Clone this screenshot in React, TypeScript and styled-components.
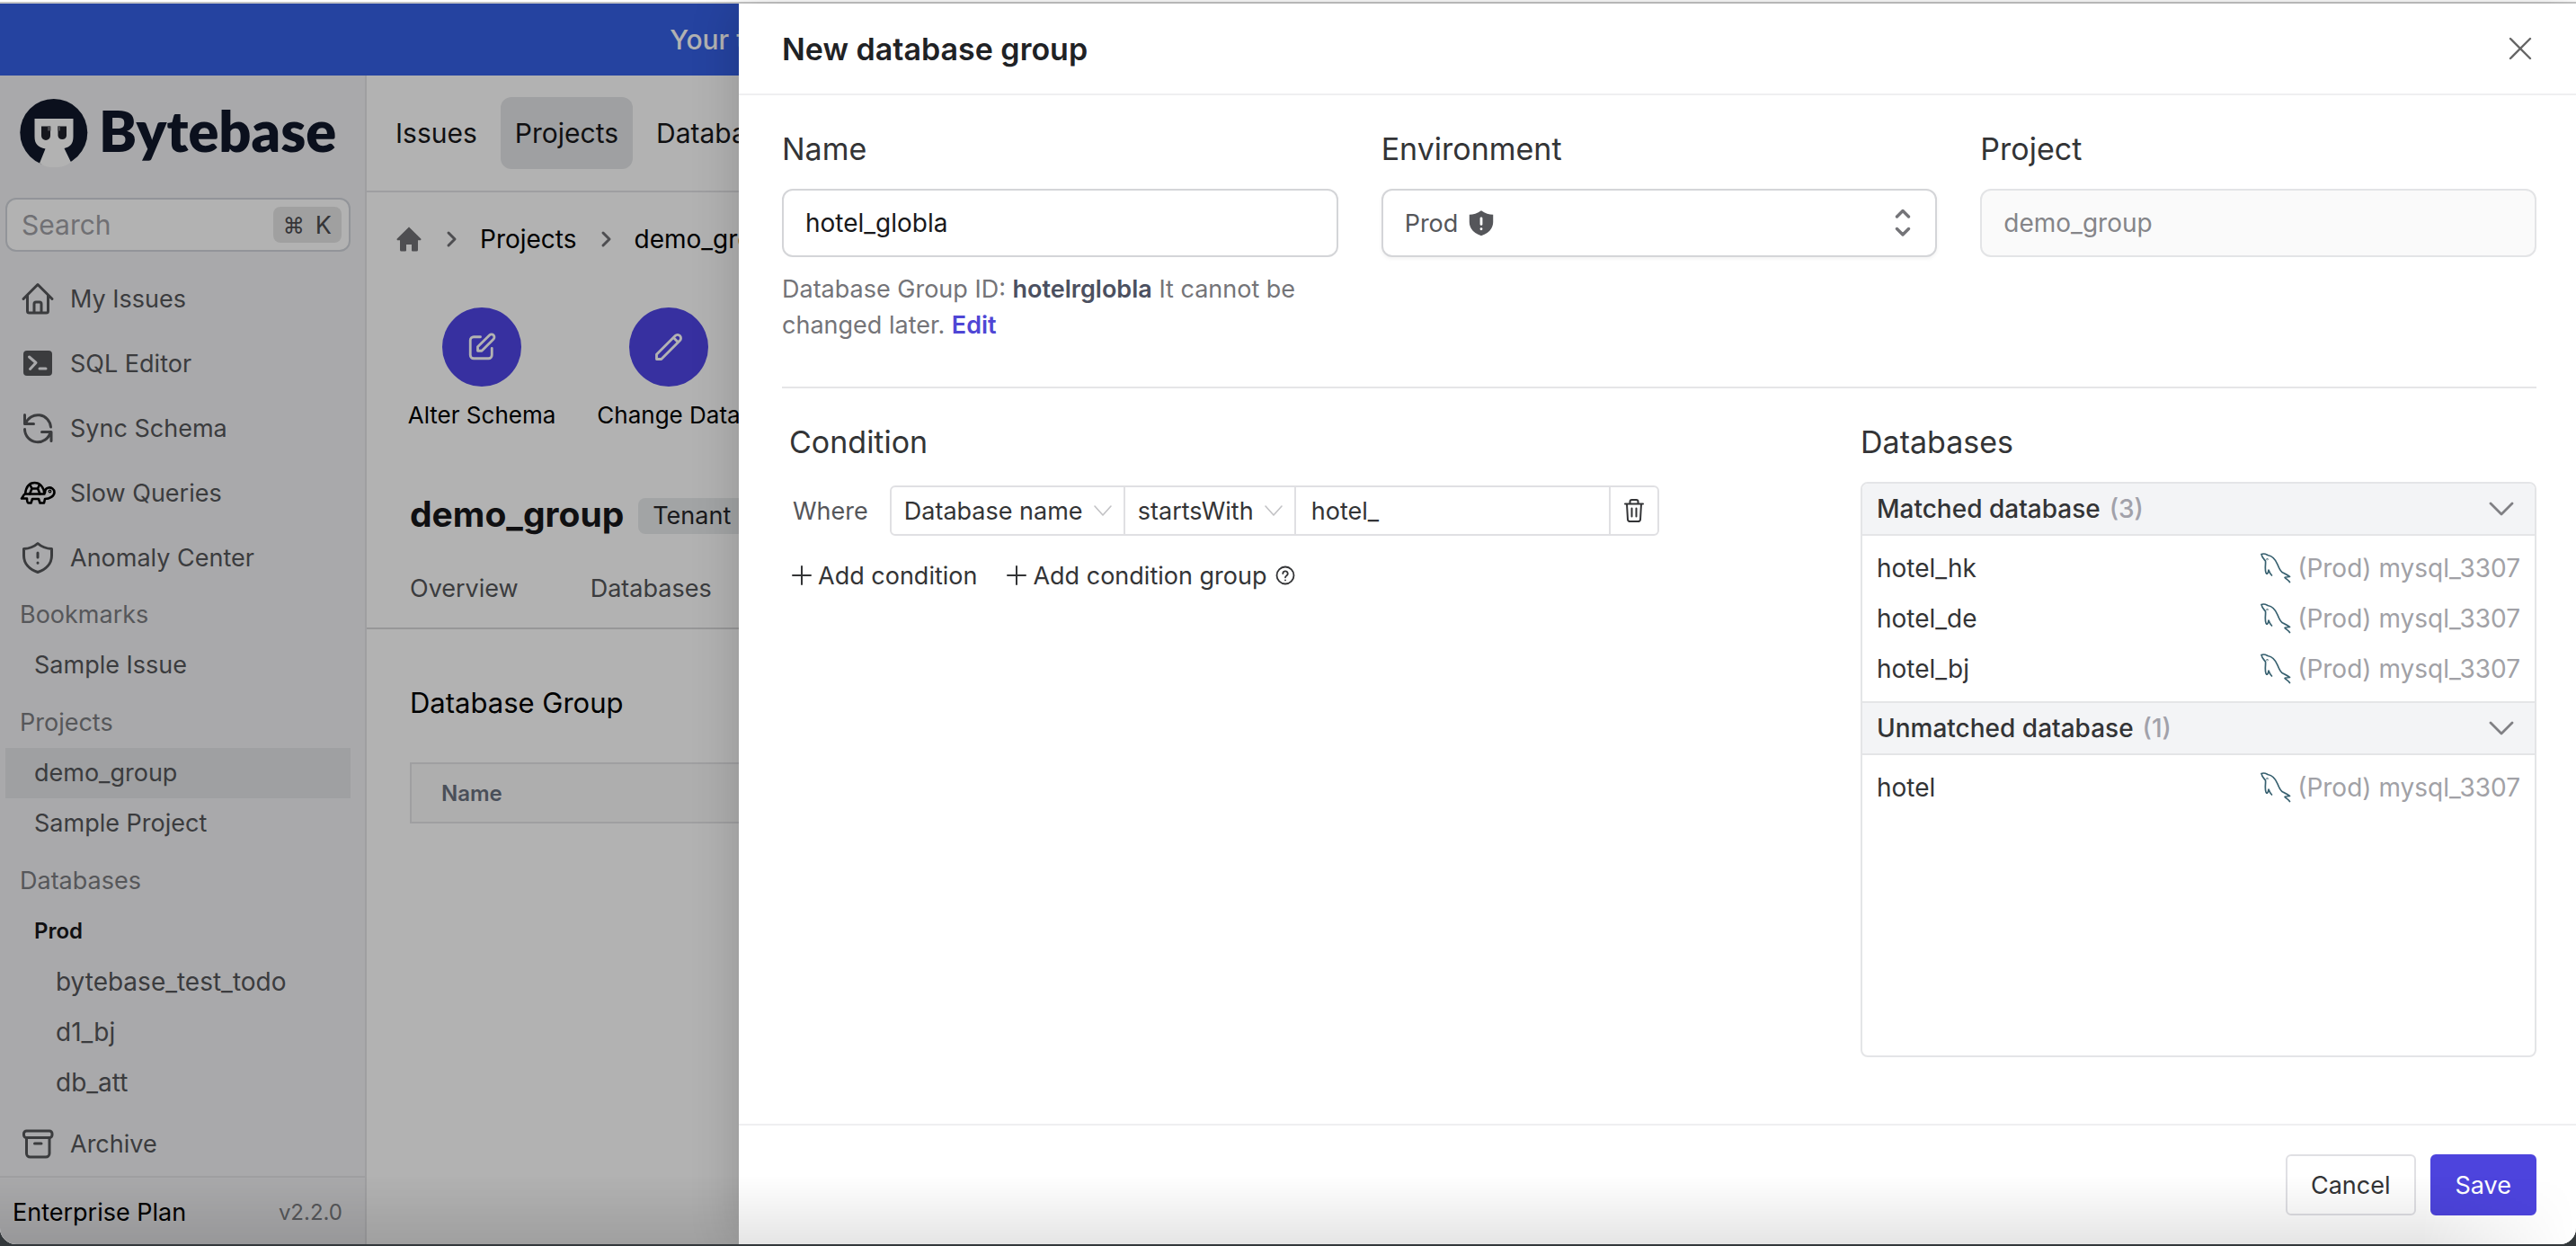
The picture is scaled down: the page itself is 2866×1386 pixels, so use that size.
import React from "react";
import styled, { createGlobalStyle } from "styled-components";

const Global = createGlobalStyle`
  *, *::before, *::after { box-sizing: border-box; }
  html, body, #root { height: 100%; }
  body {
    margin: 0;
    overflow: hidden;
    background: #33383b;
    font-family: Inter, "DejaVu Sans", sans-serif;
    font-size: 27px;
    color: #333436;
  }
  button, input, select { font: inherit; color: inherit; margin: 0; }
  button { cursor: pointer; }
  h1, h2, h3, p, ul { margin: 0; padding: 0; font-weight: 400; }
  ul { list-style: none; }
  a { color: inherit; text-decoration: none; }
`;

/* ---------- window ---------- */

const Window = styled.div`
  height: calc(100vh - 2px);
  display: flex;
  flex-direction: column;
  position: relative;
  overflow: hidden;
  background: #fff;
  border-radius: 0 0 18px 18px;
`;

const TopEdge = styled.div`
  height: 4px;
  flex: none;
  background: #fff;
  border-bottom: 2px solid #c6c6c6;
`;

const Page = styled.div`
  flex: 1;
  min-height: 0;
  position: relative;
  display: flex;
  flex-direction: column;
`;

const Banner = styled.div`
  height: 80px;
  flex: none;
  display: flex;
  align-items: center;
  padding-left: 26%;
  background: #3560e5;
  color: #fff;
  font-size: 30px;
  font-weight: 500;
  white-space: nowrap;
`;

const Columns = styled.div`
  flex: 1;
  min-height: 0;
  display: flex;
`;

/* ---------- sidebar ---------- */

const Sidebar = styled.aside`
  width: 408px;
  flex: none;
  display: flex;
  flex-direction: column;
  background: #f3f3f5;
  border-right: 2px solid #e4e4e7;
`;

const Brand = styled.a`
  height: 136px;
  display: flex;
  align-items: center;
  gap: 12px;
  padding: 0 0 8px 22px;
  color: #10182a;
  font-family: Lato, Inter, sans-serif;
  font-size: 63px;
  font-weight: 800;
  line-height: 72px;
`;

const BrandName = styled.span`
  padding-bottom: 6px;
`;

const SearchBox = styled.label`
  height: 60px;
  margin: 0 16px 16px 6px;
  padding: 0 8px 0 16px;
  display: flex;
  align-items: center;
  background: #fff;
  border: 2px solid #d1d5db;
  border-radius: 12px;
`;

const SearchInput = styled.input`
  flex: 1;
  min-width: 0;
  padding: 0;
  border: 0;
  outline: 0;
  background: none;
  font-size: 30px;
  &::placeholder { color: #a1a1a6; opacity: 1; }
`;

const Kbd = styled.kbd`
  height: 40px;
  padding: 0 11px;
  display: flex;
  align-items: center;
  gap: 12px;
  background: #e6e6e6;
  border-radius: 8px;
  color: #4c4c50;
  font-family: inherit;
  font-size: 27px;
  span:first-child { font-size: 24px; }
`;

const NavLink = styled.a`
  height: 72px;
  flex: none;
  padding-left: 24px;
  display: flex;
  align-items: center;
  gap: 18px;
  color: #55565a;
`;

const SectionLabel = styled.h3`
  height: 56px;
  padding-left: 22px;
  line-height: 56px;
  font-size: 27px;
  color: #7c7d82;
  ul + & { margin-top: 8px; }
`;

const TreeItem = styled.a<{ $active?: boolean; $deep?: boolean; $strong?: boolean }>`
  display: block;
  height: 56px;
  margin: 0 16px 0 6px;
  padding-left: ${(p) => (p.$deep ? 56 : 32)}px;
  line-height: 56px;
  font-size: ${(p) => (p.$strong ? 24 : p.$deep ? 28 : 27)}px;
  font-weight: ${(p) => (p.$strong ? 600 : 400)};
  color: ${(p) => (p.$strong ? "#18181b" : "#55565a")};
  background: ${(p) => (p.$active ? "#e4e6e8" : "none")};
`;

const SidebarEnd = styled.div`
  margin-top: auto;
`;

const PlanBar = styled.div`
  height: 76px;
  padding: 2px 25px 0 14px;
  display: flex;
  align-items: center;
  justify-content: space-between;
  border-top: 2px solid #e4e4e7;
  color: #000;
`;

const Version = styled.span`
  font-size: 24px;
  color: #7c7d82;
`;

/* ---------- main page ---------- */

const Main = styled.main`
  flex: 1;
  min-width: 0;
  background: #fff;
  white-space: nowrap;
`;

const TopNav = styled.nav`
  height: 130px;
  padding: 0 16px;
  display: flex;
  align-items: center;
  gap: 10px;
  border-bottom: 2px solid #e4e4e7;
`;

const TopLink = styled.a<{ $active?: boolean }>`
  height: 80px;
  padding: 0 16px;
  line-height: 80px;
  font-size: 30px;
  color: #18181b;
  border-radius: 12px;
  background: ${(p) => (p.$active ? "#e4e6e8" : "none")};
`;

const Crumbs = styled.nav`
  height: 104px;
  padding-left: 32px;
  display: flex;
  align-items: center;
  gap: 18px;
  font-size: 28px;
  color: #000;
`;

const Actions = styled.div`
  padding: 24px 0 0 48px;
  display: flex;
  gap: 48px;
`;

const Action = styled.button`
  width: 160px;
  padding: 0;
  border: 0;
  background: none;
  display: flex;
  flex-direction: column;
  align-items: center;
  gap: 12px;
  font-size: 26px;
  line-height: 40px;
  white-space: nowrap;
  color: #000;
`;

const ActionIcon = styled.span`
  width: 88px;
  height: 88px;
  border-radius: 50%;
  display: grid;
  place-items: center;
  background: #4f46e5;
  color: #fff;
`;

const TitleRow = styled.div`
  padding: 68px 0 0 48px;
  display: flex;
  align-items: flex-end;
  gap: 16px;
`;

const Title = styled.h1`
  font-size: 39px;
  font-weight: 700;
  line-height: 44px;
  color: #18181b;
`;

const Tag = styled.span`
  height: 40px;
  padding: 0 16px;
  line-height: 40px;
  background: #e9ebed;
  border-radius: 8px;
  color: #27272a;
`;

const Tabs = styled.nav`
  height: 106px;
  padding: 16px 0 0 48px;
  display: flex;
  align-items: center;
  gap: 80px;
  border-bottom: 2px solid #d8d8da;
  color: #55565a;
`;

const SectionTitle = styled.h2`
  padding: 60px 0 0 48px;
  font-size: 31px;
  font-weight: 400;
  line-height: 44px;
  color: #000;
`;

const GroupTable = styled.table`
  width: calc(100% - 96px);
  height: 68px;
  margin: 44px 48px 0;
  border: 2px solid #e4e4e7;
  border-spacing: 0;
  background: #fafafa;
`;

const HeadCell = styled.th`
  padding: 0 33px;
  text-align: left;
  font-size: 24px;
  font-weight: 600;
  color: #6b7280;
`;

/* ---------- drawer ---------- */

const Mask = styled.div`
  position: absolute;
  inset: 0;
  background: rgba(0, 0, 0, 0.3);
`;

const Drawer = styled.section`
  position: absolute;
  top: 0;
  right: 0;
  bottom: 0;
  width: calc(100% - 822px);
  display: flex;
  flex-direction: column;
  background: #fff;
  box-shadow: -4px 0 48px rgba(0, 0, 0, 0.16);
`;

const DrawerHead = styled.header`
  height: 102px;
  flex: none;
  padding: 0 44px 0 48px;
  display: flex;
  align-items: center;
  justify-content: space-between;
  border-bottom: 2px solid #efeff1;
`;

const DrawerTitle = styled.h2`
  font-size: 34px;
  font-weight: 600;
  color: #1f2225;
`;

const IconButton = styled.button`
  width: 36px;
  height: 36px;
  padding: 0;
  border: 0;
  background: none;
  display: grid;
  place-items: center;
  color: #666;
`;

const DrawerBody = styled.div`
  flex: 1;
  min-height: 0;
  padding: 36px 44px 0 48px;
`;

const Fields = styled.div`
  display: grid;
  grid-template-columns: repeat(3, 1fr);
  gap: 48px;
  padding-bottom: 48px;
  border-bottom: 2px solid #e5e5e7;
`;

const FieldLabel = styled.label`
  display: block;
  margin-bottom: 20px;
  font-size: 34px;
  line-height: 48px;
`;

const TextInput = styled.input`
  display: block;
  width: 100%;
  height: 76px;
  padding: 0 24px;
  border: 2px solid #d4d5d8;
  border-radius: 12px;
  outline: 0;
  background: #fff;
  font-size: 28px;
  color: #18181b;
  &:disabled { background: #fafafa; border-color: #e3e4e6; color: #858589; }
`;

const SelectWrap = styled.div`
  position: relative;
`;

const Select = styled.select`
  display: block;
  width: 100%;
  height: 76px;
  padding: 0 24px;
  border: 2px solid #d4d5d8;
  border-radius: 12px;
  outline: 0;
  appearance: none;
  background: #fff;
  color: #55565a;
  box-shadow: 0 2px 4px rgba(0, 0, 0, 0.05);
`;

const SelectMark = styled.span`
  position: absolute;
  inset: 0;
  padding: 0 22px 0 94px;
  display: flex;
  align-items: center;
  justify-content: space-between;
  pointer-events: none;
  color: #55565a;
`;

const Help = styled.p`
  margin-top: 16px;
  line-height: 40px;
  color: #747478;
  strong { font-weight: 600; color: #4b5060; }
  a { font-weight: 600; color: #4f46d5; }
`;

const Lower = styled.div`
  display: grid;
  grid-template-columns: 1fr 752px;
  padding-top: 36px;
`;

const Condition = styled.div`
  padding-left: 8px;
`;

const PanelTitle = styled.h3`
  margin-bottom: 20px;
  font-size: 34px;
  line-height: 48px;
`;

const Rule = styled.div`
  display: flex;
  align-items: center;
  gap: 24px;
  padding: 4px 0 0 4px;
  color: #55565a;
`;

const RuleBox = styled.div`
  height: 56px;
  display: grid;
  grid-template-columns: 258px 190px 350px 54px;
  border: 2px solid #e0e0e3;
  border-radius: 6px;
  color: #333436;
  && > * + * { border-left: 2px solid #e0e0e3; }
`;

const RuleCell = styled.label`
  position: relative;
  display: flex;
  svg { position: absolute; right: 11px; top: 14px; pointer-events: none; }
`;

const RuleSelect = styled.select`
  width: 100%;
  padding: 0 0 0 14px;
  border: 0;
  outline: 0;
  appearance: none;
  background: none;
`;

const RuleInput = styled.input`
  width: 100%;
  padding: 0 17px;
  border: 0;
  outline: 0;
  background: none;
`;

const RuleDelete = styled.button`
  padding: 0;
  border: 0;
  background: none;
  display: grid;
  place-items: center;
`;

const AddRow = styled.div`
  display: flex;
  gap: 32px;
  padding: 24px 0 0 2px;
`;

const AddButton = styled.button`
  height: 40px;
  padding: 0;
  border: 0;
  background: none;
  display: flex;
  align-items: center;
  gap: 6px;
`;

const ListBox = styled.div`
  height: 640px;
  border: 2px solid #e4e5e7;
  border-radius: 8px;
  overflow: hidden;
  font-size: 28px;
`;

const GroupHead = styled.button`
  width: 100%;
  height: 58px;
  padding: 0 21px 0 16px;
  border: 0;
  border-bottom: 2px solid #e4e5e7;
  background: #f3f4f6;
  display: flex;
  align-items: center;
  gap: 10px;
  font-weight: 500;
  ul + & { height: 60px; border-top: 2px solid #e4e5e7; }
  svg { margin-left: auto; color: #808084; }
`;

const Count = styled.span`
  color: #a1a1aa;
`;

const DbList = styled.ul`
  padding: 8px 16px;
`;

const DbRow = styled.li`
  height: 56px;
  display: flex;
  align-items: center;
  justify-content: space-between;
`;

const Instance = styled.span`
  display: flex;
  align-items: center;
  gap: 6px;
  color: #a1a1a6;
`;

const DrawerFoot = styled.footer`
  height: 134px;
  flex: none;
  padding: 0 44px;
  display: flex;
  align-items: center;
  justify-content: flex-end;
  gap: 16px;
  border-top: 2px solid #efeff1;
`;

const Button = styled.button<{ $primary?: boolean }>`
  height: 68px;
  padding: 0 26px;
  border: 2px solid ${(p) => (p.$primary ? "#4d44dd" : "#e0e0e4")};
  border-radius: 6px;
  background: ${(p) => (p.$primary ? "#4d44dd" : "#fff")};
  color: ${(p) => (p.$primary ? "#fff" : "#333436")};
`;

const BottomShade = styled.div`
  position: absolute;
  left: 0;
  right: 0;
  bottom: 0;
  height: 76px;
  pointer-events: none;
  background: linear-gradient(to bottom, rgba(0, 0, 0, 0), rgba(0, 0, 0, 0.1));
  mask-image: linear-gradient(to right, #000 94%, transparent);
`;

/* ---------- icons ---------- */

type IconProps = { size?: number; box?: number; width?: number; children: React.ReactNode; color?: string };

const Glyph = styled.svg`
  flex: none;
  overflow: visible;
`;

const Icon = ({ size = 36, box = 36, width = 3, color = "currentColor", children }: IconProps) => (
  <Glyph
    width={size}
    height={size}
    viewBox={`0 0 ${box} ${box}`}
    fill="none"
    stroke={color}
    strokeWidth={width}
    strokeLinecap="round"
    strokeLinejoin="round"
    aria-hidden="true"
  >
    {children}
  </Glyph>
);

const LogoMark = () => (
  <svg width="76" height="76" viewBox="0 0 76 76" aria-hidden="true">
    <circle cx="37.8" cy="37.5" r="37.5" fill="#10182a" />
    <path
      d="M16.5 22H59.5V42C59.5 50 56 53.5 49.5 55L57 70.5C51 75 44 76.5 38 76C31 76.5 26 74 22 71.5L28.5 55.5C20 53.5 16.5 50 16.5 42Z"
      fill="#fff"
    />
    <path d="M24 30.5H34V41a5 5 0 0 1-10 0ZM42.5 30.5H52V41a4.8 4.8 0 0 1-9.5 0Z" fill="#20222a" />
    <path d="M31 30.5h3.5v5H31zM42 30.5h3v5h-3z" fill="#6a6b70" />
  </svg>
);

const HouseIcon = () => (
  <Icon>
    <path d="M2 18.5 18 2.5l16 16M6.5 15v17a2 2 0 0 0 2 2h19a2 2 0 0 0 2-2V15M14 34V24a2 2 0 0 1 2-2h4a2 2 0 0 1 2 2v10" />
  </Icon>
);

const TerminalIcon = () => (
  <Icon width={3}>
    <rect x="2" y="4" width="32" height="28" rx="4" fill="currentColor" stroke="none" />
    <path d="m8.5 11 7.5 6.5-6.5 7M20 24h7" stroke="#f3f3f5" />
  </Icon>
);

const SyncIcon = () => (
  <Icon>
    <path d="M3.5 3.5v10h10M4.5 13A14.5 14.5 0 0 1 32.5 17M33 32.5v-10H22.5M3.5 19.5A14.5 14.5 0 0 0 32 23" />
  </Icon>
);

const TurtleIcon = () => (
  <Icon width={2.6} color="#000">
    <path d="M4 19.500C5 11 9 7 14.500 7S24.500 11 25.500 19.500ZM4 19.500C2 20 1.500 23 0 24.500H6C6 27 6 29.500 8 29.500H10.500L12 25H19L20.500 29.500H25L26 25C31 25 36.500 22 36.500 17.500 36.500 14 33 12 30 12.500 27 13 26 15 26 18" />
    <path d="M11.500 13.500H18L20.500 19.500M11.500 13.500 9 19.500M11.500 13.500 9.500 9.500M18 13.500 20 9" />
    <circle cx="31.500" cy="16.500" r="0.600" />
  </Icon>
);

const ShieldIcon = () => (
  <Icon>
    <path d="M18 2.500C13.500 6.500 8 8.300 2.500 8.500V16C2.500 25 9 31.500 18 34.500 27 31.500 33.500 25 33.500 16V8.500C28 8.300 22.500 6.500 18 2.500Z" />
    <path d="M18 13v5M18 24v.2" />
  </Icon>
);

const ArchiveIcon = () => (
  <Icon>
    <rect x="2.500" y="4" width="31.500" height="7.500" rx="3" />
    <path d="M5.500 11.500V29a4 4 0 0 0 4 4h17.500a4 4 0 0 0 4-4V11.500M14.500 18h7.500" />
  </Icon>
);

const Crumb = () => (
  <Icon size={28} box={28} width={3} color="#707074">
    <path d="m11 7 7 7-7 7" />
  </Icon>
);

const HomeSolid = () => (
  <svg width="30" height="30" viewBox="0 0 30 30" fill="#707074" aria-hidden="true">
    <path d="M15 1.500 1.800 14.500c-.6.700-.2 1.700.8 1.700H5V27a1.500 1.500 0 0 0 1.500 1.500H11a1 1 0 0 0 1-1V21h6v6.500a1 1 0 0 0 1 1h4.500A1.500 1.500 0 0 0 25 27V16.200h2.400c1 0 1.400-1 .8-1.700Z" />
  </svg>
);

const DolphinIcon = () => (
  <Icon width={1.7} color="#37606f">
    <path d="M2 2.500C5 1 8 3 9 3.500 15 4.500 18 9 20 14 22 19 23 21 25 22.500 28 24 31 25.500 33.500 27.500 30 27.500 28 28 28 28.500 30 30.500 32 31 33.500 33.500M2 2.500C2.500 6 5 8 6.500 10 7 14 5.500 18 7 23 8 25.500 9.500 24 10 20 11 23 12.500 25 13.500 26" />
    <circle cx="8.500" cy="8.200" r="0.300" />
  </Icon>
);

const Caret = () => (
  <Icon size={24} box={24} width={1.6} color="#c2c2c5">
    <path d="m3 7 9 10 9-10" />
  </Icon>
);

const PlusIcon = () => (
  <Icon size={24} box={24} width={2}>
    <path d="M12 2v20M2 12h20" />
  </Icon>
);

/* ---------- data ---------- */

const navItems = [
  { label: "My Issues", icon: <HouseIcon /> },
  { label: "SQL Editor", icon: <TerminalIcon /> },
  { label: "Sync Schema", icon: <SyncIcon /> },
  { label: "Slow Queries", icon: <TurtleIcon /> },
  { label: "Anomaly Center", icon: <ShieldIcon /> },
];

const groups = [
  { title: "Matched database", items: ["hotel_hk", "hotel_de", "hotel_bj"] },
  { title: "Unmatched database", items: ["hotel"] },
];

/* ---------- app ---------- */

const SideMenu = () => (
  <Sidebar>
    <Brand href="#">
      <LogoMark />
      <BrandName>Bytebase</BrandName>
    </Brand>
    <SearchBox>
      <SearchInput placeholder="Search" aria-label="Search" />
      <Kbd>
        <span>⌘</span>
        <span>K</span>
      </Kbd>
    </SearchBox>
    {navItems.map((n) => (
      <NavLink href="#" key={n.label}>
        {n.icon}
        {n.label}
      </NavLink>
    ))}
    <SectionLabel>Bookmarks</SectionLabel>
    <ul>
      <li><TreeItem href="#">Sample Issue</TreeItem></li>
    </ul>
    <SectionLabel>Projects</SectionLabel>
    <ul>
      <li><TreeItem href="#" $active>demo_group</TreeItem></li>
      <li><TreeItem href="#">Sample Project</TreeItem></li>
    </ul>
    <SectionLabel>Databases</SectionLabel>
    <ul>
      <li><TreeItem href="#" $strong>Prod</TreeItem></li>
      <li><TreeItem href="#" $deep>bytebase_test_todo</TreeItem></li>
      <li><TreeItem href="#" $deep>d1_bj</TreeItem></li>
      <li><TreeItem href="#" $deep>db_att</TreeItem></li>
    </ul>
    <SidebarEnd>
      <NavLink href="#">
        <ArchiveIcon />
        Archive
      </NavLink>
      <PlanBar>
        Enterprise Plan
        <Version>v2.2.0</Version>
      </PlanBar>
    </SidebarEnd>
  </Sidebar>
);

const ProjectPage = () => (
  <Main>
    <TopNav>
      <TopLink href="#">Issues</TopLink>
      <TopLink href="#" $active>Projects</TopLink>
      <TopLink href="#">Databases</TopLink>
    </TopNav>
    <Crumbs>
      <HomeSolid />
      <Crumb />
      <a href="#">Projects</a>
      <Crumb />
      <a href="#">demo_group</a>
    </Crumbs>
    <Actions>
      <Action>
        <ActionIcon>
          <Icon size={36} box={24} width={1.9}>
            <path d="M11 4.500H6A2.500 2.500 0 0 0 3.500 7v11A2.500 2.500 0 0 0 6 20.500h11a2.500 2.500 0 0 0 2.500-2.500v-5M17.800 3.200a2 2 0 0 1 2.900 2.900L12 14.800H9v-3Z" />
          </Icon>
        </ActionIcon>
        Alter Schema
      </Action>
      <Action>
        <ActionIcon>
          <Icon size={36} box={24} width={1.9}>
            <path d="m15.500 5 3.500 3.500M16.800 3.700a2.400 2.400 0 0 1 3.500 3.500L6.500 21H3v-3.500Z" />
          </Icon>
        </ActionIcon>
        Change Data
      </Action>
    </Actions>
    <TitleRow>
      <Title>demo_group</Title>
      <Tag>Tenant</Tag>
    </TitleRow>
    <Tabs>
      <a href="#">Overview</a>
      <a href="#">Databases</a>
    </Tabs>
    <SectionTitle>Database Group</SectionTitle>
    <GroupTable>
      <thead>
        <tr>
          <HeadCell scope="col">Name</HeadCell>
        </tr>
      </thead>
    </GroupTable>
  </Main>
);

const GroupDrawer = () => (
  <Drawer role="dialog" aria-labelledby="drawer-title">
    <DrawerHead>
      <DrawerTitle id="drawer-title">New database group</DrawerTitle>
      <IconButton aria-label="Close">
        <Icon size={28} box={28} width={2.4}>
          <path d="m3 3 22 22M25 3 3 25" />
        </Icon>
      </IconButton>
    </DrawerHead>
    <DrawerBody>
      <Fields>
        <div>
          <FieldLabel htmlFor="name">Name</FieldLabel>
          <TextInput id="name" defaultValue="hotel_globla" />
          <Help>
            Database Group ID: <strong>hotelrglobla</strong> It cannot be changed later. <a href="#">Edit</a>
          </Help>
        </div>
        <div>
          <FieldLabel htmlFor="environment">Environment</FieldLabel>
          <SelectWrap>
            <Select id="environment">
              <option>Prod</option>
            </Select>
            <SelectMark>
              <Icon size={34} width={3}>
                <path
                  d="M18 3.500C13.500 7 8.500 8 4 8.200V17C4 25 10 30.500 18 33 26 30.500 32 25 32 17V8.200C27.500 8 22.500 7 18 3.500Z"
                  fill="currentColor"
                  stroke="none"
                />
                <path d="M18 12.500v7M18 25v.2" stroke="#fff" />
              </Icon>
              <Icon size={32} box={32} width={3.4} color="#747478">
                <path d="m9.500 9 6.500-6.500L22.500 9M9.500 22.500l6.500 6.500 6.500-6.500" />
              </Icon>
            </SelectMark>
          </SelectWrap>
        </div>
        <div>
          <FieldLabel htmlFor="project">Project</FieldLabel>
          <TextInput id="project" defaultValue="demo_group" disabled />
        </div>
      </Fields>
      <Lower>
        <Condition>
          <PanelTitle>Condition</PanelTitle>
          <Rule>
            Where
            <RuleBox>
              <RuleCell>
                <RuleSelect aria-label="Factor">
                  <option>Database name</option>
                </RuleSelect>
                <Caret />
              </RuleCell>
              <RuleCell>
                <RuleSelect aria-label="Operator">
                  <option>startsWith</option>
                </RuleSelect>
                <Caret />
              </RuleCell>
              <RuleInput aria-label="Value" defaultValue="hotel_" />
              <RuleDelete aria-label="Delete condition">
                <Icon size={28} box={28} width={2}>
                  <path d="M4 6.500h20M9.500 6V4a2 2 0 0 1 2-2h5a2 2 0 0 1 2 2v2M6 6.500l1 17.500a2.500 2.500 0 0 0 2.500 2h9a2.500 2.500 0 0 0 2.500-2l1-17.500M11.500 11.500v9M16.500 11.500v9" />
                </Icon>
              </RuleDelete>
            </RuleBox>
          </Rule>
          <AddRow>
            <AddButton>
              <PlusIcon />
              Add condition
            </AddButton>
            <AddButton>
              <PlusIcon />
              Add condition group
              <Icon size={26} box={26} width={1.8}>
                <circle cx="15" cy="13" r="9.500" />
                <path d="M12.300 11a2.700 2.700 0 1 1 4 2.400c-1 .6-1.300 1-1.300 1.900M15 18.300v.1" />
              </Icon>
            </AddButton>
          </AddRow>
        </Condition>
        <div>
          <PanelTitle>Databases</PanelTitle>
          <ListBox>
            {groups.map((g) => (
              <React.Fragment key={g.title}>
                <GroupHead>
                  {g.title}
                  <Count>({g.items.length})</Count>
                  <Icon size={32} box={32} width={2.8}>
                    <path d="m4 10 12 12 12-12" />
                  </Icon>
                </GroupHead>
                <DbList>
                  {g.items.map((name) => (
                    <DbRow key={name}>
                      {name}
                      <Instance>
                        <DolphinIcon />
                        (Prod) mysql_3307
                      </Instance>
                    </DbRow>
                  ))}
                </DbList>
              </React.Fragment>
            ))}
          </ListBox>
        </div>
      </Lower>
    </DrawerBody>
    <DrawerFoot>
      <Button>Cancel</Button>
      <Button $primary>Save</Button>
    </DrawerFoot>
  </Drawer>
);

export default function App() {
  return (
    <>
      <Global />
      <Window>
        <TopEdge />
        <Page>
          <Banner>Your trial</Banner>
          <Columns>
            <SideMenu />
            <ProjectPage />
          </Columns>
          <Mask />
          <GroupDrawer />
          <BottomShade />
        </Page>
      </Window>
    </>
  );
}
